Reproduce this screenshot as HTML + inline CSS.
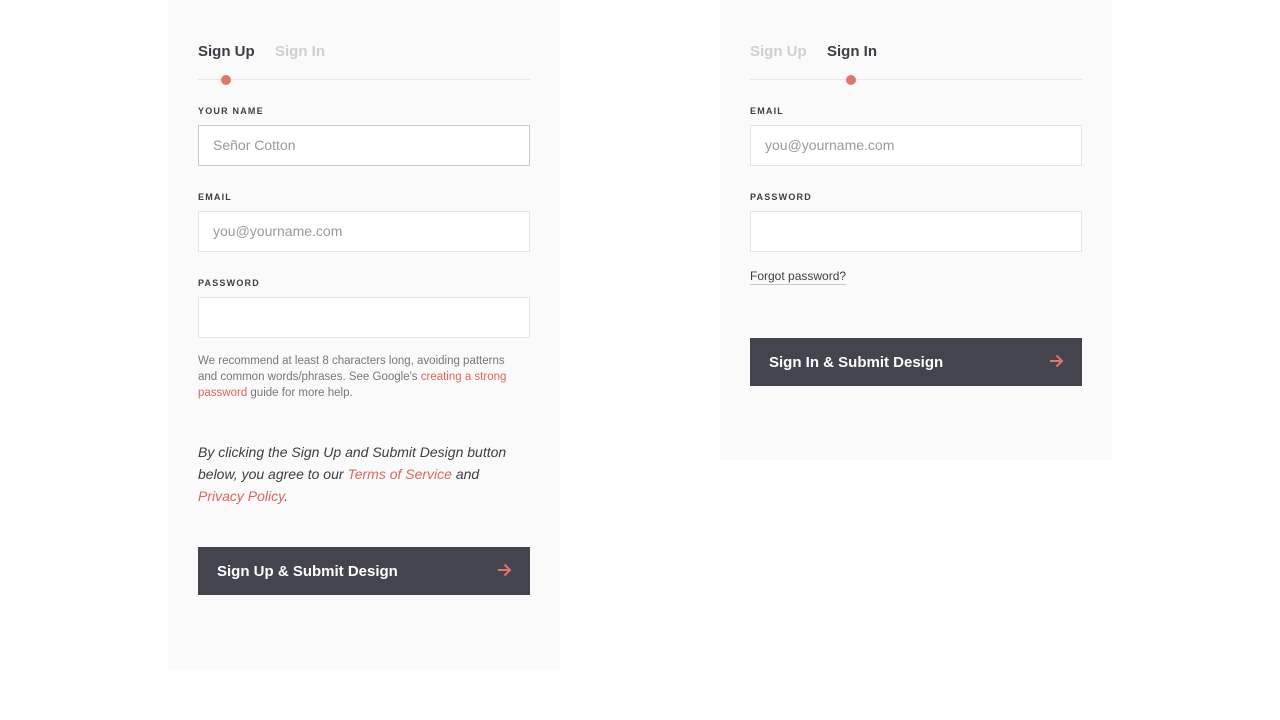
<!DOCTYPE html>
<html><head><meta charset="utf-8"><style>
*{box-sizing:border-box;margin:0;padding:0}
body{width:1280px;height:720px;background:#fff;font-family:"Liberation Sans",sans-serif;position:relative;overflow:hidden}
.panel{position:absolute;background:#fafafa}
.a{position:absolute}
.tab{font-size:15px;font-weight:bold;top:43px}
.on{color:#3d3e45}.off{color:#cfcfcf}
.line{height:1px;background:#e8e8e8;width:332px;top:79px}
.dot{width:10px;height:10px;border-radius:50%;background:#e0766b;top:75px}
.lbl{font-size:9px;font-weight:bold;letter-spacing:1.2px;color:#3d3e45}
.inp{width:332px;height:41px;background:#fff;border:1px solid #e4e4e4;font-size:14px;color:#9a9a9a;padding:11px 14px}
.btn{width:332px;height:48px;background:#43444d;color:#fff;font-weight:bold;font-size:15px;padding:16px 19px}
.btn svg{position:absolute;right:18px;top:16px}
.red{color:#e0655a}
</style></head><body>
<div class="panel" style="left:168px;top:0;width:392px;height:670px"></div>
<div class="panel" style="left:720px;top:0;width:392px;height:461px"></div>

<div class="a tab on" style="left:198px">Sign Up</div>
<div class="a tab off" style="left:275px">Sign In</div>
<div class="a line" style="left:198px"></div>
<div class="a dot" style="left:221px"></div>
<div class="a lbl" style="left:198px;top:106px">YOUR NAME</div>
<div class="a inp" style="left:198px;top:125px;border-color:#ccc">Señor Cotton</div>
<div class="a lbl" style="left:198px;top:192px">EMAIL</div>
<div class="a inp" style="left:198px;top:211px">you@yourname.com</div>
<div class="a lbl" style="left:198px;top:278px">PASSWORD</div>
<div class="a inp" style="left:198px;top:297px"></div>
<div class="a" style="left:198px;top:353px;width:335px;font-size:11.5px;line-height:16px;color:#777">We recommend at least 8 characters long, avoiding patterns<br>and common words/phrases. See Google's <span class="red">creating a strong password</span> guide for more help.</div>
<div class="a" style="left:198px;top:441px;width:318px;font-size:14px;line-height:22px;color:#3d3e45;font-style:italic">By clicking the Sign Up and Submit Design button below, you agree to our <span class="red">Terms of Service</span> and <span class="red">Privacy Policy</span>.</div>
<div class="a btn" style="left:198px;top:547px">Sign Up &amp; Submit Design<svg width="15" height="14" viewBox="0 0 15 14"><path d="M1 7H13M7.5 1.5L13 7L7.5 12.5" fill="none" stroke="#e0766b" stroke-width="2"/></svg></div>

<div class="a tab off" style="left:750px">Sign Up</div>
<div class="a tab on" style="left:827px">Sign In</div>
<div class="a line" style="left:750px"></div>
<div class="a dot" style="left:846px"></div>
<div class="a lbl" style="left:750px;top:106px">EMAIL</div>
<div class="a inp" style="left:750px;top:125px">you@yourname.com</div>
<div class="a lbl" style="left:750px;top:192px">PASSWORD</div>
<div class="a inp" style="left:750px;top:211px"></div>
<div class="a" style="left:750px;top:269px;font-size:12px;color:#3d3e45;border-bottom:1px solid #ccc;line-height:15px">Forgot password?</div>
<div class="a btn" style="left:750px;top:338px">Sign In &amp; Submit Design<svg width="15" height="14" viewBox="0 0 15 14"><path d="M1 7H13M7.5 1.5L13 7L7.5 12.5" fill="none" stroke="#e0766b" stroke-width="2"/></svg></div>
</body></html>
